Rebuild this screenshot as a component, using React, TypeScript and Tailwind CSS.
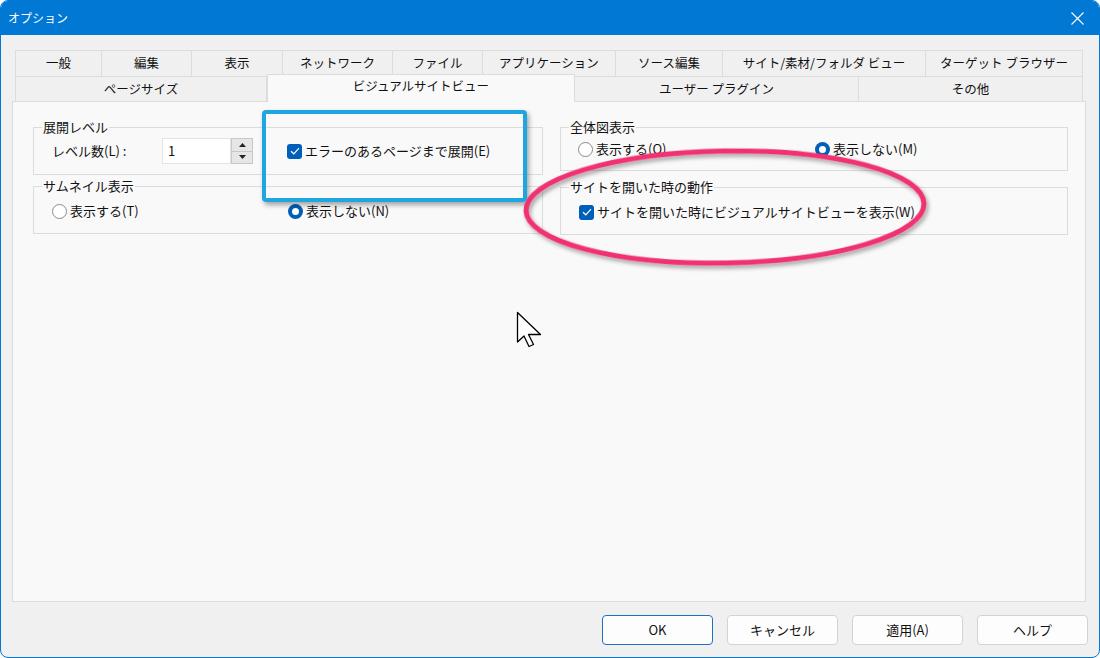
// Options dialog: Visual Site View tab
import React from 'react';

const font = { fontFamily: '"Noto Sans CJK JP", "Noto Sans", sans-serif' };

const row1 = [
  { label: '一般', w: 'w-[87px]' },
  { label: '編集', w: 'w-[90px]' },
  { label: '表示', w: 'w-[91px]' },
  { label: 'ネットワーク', w: 'w-[110px]' },
  { label: 'ファイル', w: 'w-[90px]' },
  { label: 'アプリケーション', w: 'w-[133px]' },
  { label: 'ソース編集', w: 'w-[107px]' },
  { label: 'サイト/素材/フォルダ ビュー', w: 'w-[203px]' },
  { label: 'ターゲット ブラウザー', w: 'w-[157px]' },
];

const row2 = [
  { label: 'ページサイズ', w: 'w-[252px]' },
  { label: 'ビジュアルサイトビュー', w: 'w-[308px]', active: true },
  { label: 'ユーザー プラグイン', w: 'w-[284px]' },
  { label: 'その他', w: 'w-[224px]' },
];

function Checkbox({ label }: { label: string }) {
  return (
    <div className="flex items-center gap-[3px]">
      <span className="w-[15px] h-[15px] rounded-[3px] bg-[#005FB8] flex items-center justify-center">
        <svg width="10" height="8" viewBox="0 0 10 8">
          <path d="M1 4.2 L3.8 6.8 L9 1.2" fill="none" stroke="white" strokeWidth="1.2" />
        </svg>
      </span>
      <span>{label}</span>
    </div>
  );
}

function Radio({ label, checked }: { label: string; checked?: boolean }) {
  return (
    <div className="flex items-center gap-[3px]">
      {checked ? (
        <span className="w-[15px] h-[15px] rounded-full bg-[#005FB8] flex items-center justify-center">
          <span className="w-[7px] h-[7px] rounded-full bg-white" />
        </span>
      ) : (
        <span className="w-[15px] h-[15px] rounded-full border border-[#8A8A8A] bg-white" />
      )}
      <span>{label}</span>
    </div>
  );
}

function Group({ title, children, className }: { title: string; children: React.ReactNode; className?: string }) {
  return (
    <fieldset className="border border-[#DCDCDC]">
      <legend className="ml-[8px] px-[1px] leading-[16px] text-[13px]">{title}</legend>
      <div className={className}>{children}</div>
    </fieldset>
  );
}

export default function App() {
  return (
    <div className="relative w-[1100px] h-[658px] bg-white text-[12px] text-[#111]" style={font}>
      <div className="w-full h-full flex flex-col border border-[#0078D4] rounded-[8px] overflow-hidden bg-[#F0F0F0]">
        {/* title bar */}
        <div className="h-[34px] shrink-0 bg-[#0078D4] flex items-center justify-between pl-[7px] pr-[15px] text-white">
          <span className="text-[12px]">オプション</span>
          <svg width="13" height="13" viewBox="0 0 13 13">
            <path d="M0.5 0.5 L12.5 12.5 M12.5 0.5 L0.5 12.5" stroke="white" strokeWidth="1.1" />
          </svg>
        </div>

        <div className="flex-1 flex flex-col pt-[15px] pl-[11px] pr-[13px]">
          {/* tabs */}
          <div className="flex flex-col px-[3px] text-[12.5px]">
            <div className="flex h-[26px]">
              {row1.map((t, i) => (
                <div
                  key={t.label}
                  className={`${t.w} shrink-0 flex items-center justify-center border-t border-r border-[#DCDCDC] ${i === 0 ? 'border-l' : ''}`}
                >
                  {t.label}
                </div>
              ))}
            </div>
            <div className="flex h-[25px] items-end">
              {row2.map((t, i) =>
                t.active ? (
                  <div
                    key={t.label}
                    className={`${t.w} shrink-0 h-[28px] -mb-px relative z-10 bg-[#F9F9F9] flex items-center justify-center border-t border-l border-r border-[#DCDCDC] pb-[4px]`}
                  >
                    {t.label}
                  </div>
                ) : (
                  <div
                    key={t.label}
                    className={`${t.w} shrink-0 h-[25px] flex items-center justify-center border-t border-r border-[#DCDCDC] ${i === 0 ? 'border-l' : ''}`}
                  >
                    {t.label}
                  </div>
                ),
              )}
            </div>
          </div>

          {/* panel */}
          <div className="h-[501px] shrink-0 bg-[#F9F9F9] border border-[#DCDCDC] pt-[17px] pl-[20px] flex gap-[17px] text-[13px]">
            <div className="w-[510px] flex flex-col gap-[3px]">
              <Group title="展開レベル" className="pl-[18px] pt-[3px] pb-[10px]">
                <div className="flex items-center h-[26px]">
                  <span className="w-[110px]">レベル数(L) :</span>
                  <div className="w-[69px] h-[26px] bg-white border border-[#E3E3E3] flex items-center pl-[5px]">1</div>
                  <div className="w-[22px] h-[26px] flex flex-col bg-[#E6E6E6] border border-[#C8C8C8]">
                    <div className="flex-1 flex items-center justify-center border-b border-[#C8C8C8]">
                      <svg width="7" height="4" viewBox="0 0 7 4"><path d="M0 4 L3.5 0 L7 4 Z" fill="#222" /></svg>
                    </div>
                    <div className="flex-1 flex items-center justify-center">
                      <svg width="7" height="4" viewBox="0 0 7 4"><path d="M0 0 L3.5 4 L7 0 Z" fill="#222" /></svg>
                    </div>
                  </div>
                  <div className="ml-[34px]">
                    <Checkbox label="エラーのあるページまで展開(E)" />
                  </div>
                </div>
              </Group>
              <Group title="サムネイル表示" className="pl-[18px] pt-[9px] pb-[14px]">
                <div className="flex items-center h-[16px]">
                  <div className="w-[236px]">
                    <Radio label="表示する(T)" />
                  </div>
                  <Radio label="表示しない(N)" checked />
                </div>
              </Group>
            </div>

            <div className="w-[508px] flex flex-col gap-[8px]">
              <Group title="全体図表示" className="pl-[17px] pt-[6px] pb-[13px]">
                <div className="flex items-center h-[16px]">
                  <div className="w-[237px]">
                    <Radio label="表示する(O)" />
                  </div>
                  <Radio label="表示しない(M)" checked />
                </div>
              </Group>
              <Group title="サイトを開いた時の動作" className="pl-[18px] pt-[9px] pb-[14px]">
                <div className="flex items-center h-[16px]">
                  <Checkbox label="サイトを開いた時にビジュアルサイトビューを表示(W)" />
                </div>
              </Group>
            </div>
          </div>

          {/* buttons */}
          <div className="flex justify-end gap-[14px] mt-[13px] -mr-[2px]">
            {['OK', 'キャンセル', '適用(A)', 'ヘルプ'].map((b, i) => (
              <button
                key={b}
                className={`w-[111px] h-[30px] rounded-[4px] bg-[#FDFDFD] text-[13px] ${i === 0 ? 'border-[1.5px] border-[#1F6FC5]' : 'border border-[#D3D3D3]'}`}
              >
                {b}
              </button>
            ))}
          </div>
        </div>
      </div>

      {/* annotations */}
      <div className="absolute left-[262px] top-[110px] w-[265px] h-[92px] border-[4px] border-[#1FA6E0] rounded-[4px] shadow-[2px_3px_5px_rgba(0,0,0,0.35)] pointer-events-none" />
      <svg className="absolute left-0 top-0 pointer-events-none" width="1100" height="658">
        <defs>
          <filter id="sh" x="-10%" y="-30%" width="120%" height="160%">
            <feDropShadow dx="2" dy="3" stdDeviation="2" floodColor="#000" floodOpacity="0.35" />
          </filter>
        </defs>
        <ellipse cx="725" cy="207" rx="199" ry="56" fill="none" stroke="#F0336F" strokeWidth="5" filter="url(#sh)" transform="rotate(-1 725 207)" />
        <path
          d="M517.5 312.5 L517.5 342 L524 336 L529 346.5 L533.5 344.5 L528.5 334.5 L540.5 334.5 Z"
          fill="white"
          stroke="black"
          strokeWidth="1.3"
          strokeLinejoin="round"
        />
      </svg>
    </div>
  );
}
